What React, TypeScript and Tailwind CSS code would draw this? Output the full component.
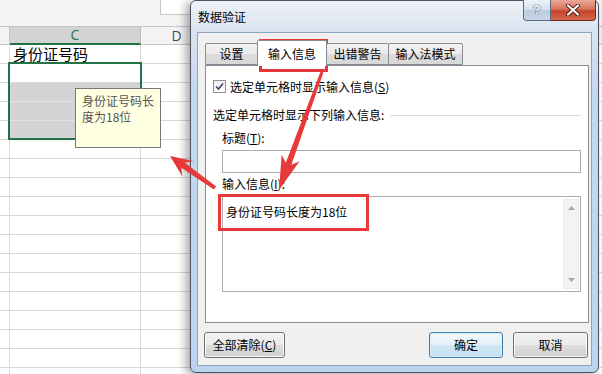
import React from "react";

const CJK = "font-['Noto_Sans_CJK_SC','Microsoft_YaHei',sans-serif]";

// polygon for a hand-drawn style annotation arrow
function arrowPoints(
  x1: number,
  y1: number,
  x2: number,
  y2: number,
  headLen: number,
  headW: number,
  shaftW: number,
  tailW: number
) {
  const dx = x2 - x1;
  const dy = y2 - y1;
  const len = Math.hypot(dx, dy);
  const ux = dx / len;
  const uy = dy / len;
  const px = -uy;
  const py = ux;
  const bx = x2 - ux * headLen;
  const by = y2 - uy * headLen;
  const jx = bx + ux * 6;
  const jy = by + uy * 6;
  const pts = [
    [x1 + (px * tailW) / 2, y1 + (py * tailW) / 2],
    [jx + (px * shaftW) / 2, jy + (py * shaftW) / 2],
    [bx + (px * headW) / 2, by + (py * headW) / 2],
    [x2, y2],
    [bx - (px * headW) / 2, by - (py * headW) / 2],
    [jx - (px * shaftW) / 2, jy - (py * shaftW) / 2],
    [x1 - (px * tailW) / 2, y1 - (py * tailW) / 2],
  ];
  return pts.map((p) => `${p[0].toFixed(1)},${p[1].toFixed(1)}`).join(" ");
}

function Row({ children, shade }: { children?: React.ReactNode; shade?: boolean }) {
  return (
    <div className="flex h-[19px]">
      <div className="w-[10px] border-r border-b border-[#d9d9d9]" />
      <div
        className={
          shade
            ? "w-[131px] border-r border-b border-[#d9d9d9] border-b-[#e4e4e4] bg-[#d4d4d4]"
            : "w-[131px] border-r border-b border-[#d9d9d9] flex items-center pl-[3px]"
        }
      >
        {children}
      </div>
      <div className="w-[72px] border-r border-b border-[#d9d9d9]" />
      <div className="flex-1 border-b border-[#d9d9d9]" />
    </div>
  );
}

function Tab({ label, active, className }: { label: string; active?: boolean; className: string }) {
  return (
    <div
      className={
        active
          ? `h-[26px] flex items-center justify-center border border-b-0 border-[#898c95] rounded-t-[2px] bg-white ${className}`
          : `h-[22px] mb-px flex items-center justify-center border border-[#898c95] rounded-t-[2px] bg-[linear-gradient(to_bottom,#f3f3f3,#ebebeb_50%,#dcdcdc_51%,#d8d8d8)] ${className}`
      }
    >
      <span className={`${CJK} text-[12px] leading-[16px] text-black`}>{label}</span>
    </div>
  );
}

function Btn({ children, primary, className }: { children: React.ReactNode; primary?: boolean; className: string }) {
  return (
    <div
      className={
        primary
          ? `h-[26px] rounded-[3px] border border-[#3c7fb1] bg-[linear-gradient(to_bottom,#f2f8fc,#e3f0f9_50%,#d0e6f4_51%,#c3def0)] shadow-[inset_0_0_0_1px_#dcecf8] flex items-center justify-center ${className}`
          : `h-[26px] rounded-[3px] border border-[#707070] bg-[linear-gradient(to_bottom,#f2f2f2,#ebebeb_50%,#dddddd_51%,#cfcfcf)] shadow-[inset_0_0_0_1px_#fafafa] flex items-center justify-center ${className}`
      }
    >
      <span className={`${CJK} text-[12px] leading-[16px] text-black`}>{children}</span>
    </div>
  );
}

export default function App() {
  return (
    <div className="relative w-[602px] h-[374px] overflow-hidden bg-white">
      {/* spreadsheet */}
      <div className="flex flex-col">
        <div className="h-[26px] bg-[#f4f4f4] flex">
          <div className="ml-[160px] w-[60px] h-[15px] bg-white border-l border-b border-[#c6c6c6]" />
        </div>
        <div className="flex h-[19px] border-t border-[#c6c6c6]">
          <div className="w-[10px] bg-[#f3f3f3] border-r border-b border-[#c6c6c6]" />
          <div className="w-[131px] bg-[#d3d3d3] border-r border-[#b8b8b8] border-b-2 border-b-[#217346] flex items-center justify-center">
            <span className="font-['Open_Sans',sans-serif] text-[14px] leading-[16px] text-[#217346]">C</span>
          </div>
          <div className="w-[72px] bg-[#f3f3f3] border-r border-b border-[#c6c6c6] flex items-center justify-center">
            <span className="font-['Open_Sans',sans-serif] text-[14px] leading-[16px] text-[#4a4a4a]">D</span>
          </div>
          <div className="flex-1 bg-[#f3f3f3] border-b border-[#c6c6c6]" />
        </div>
        <Row>
          <span className={`${CJK} text-[15px] leading-[18px] text-black`}>身份证号码</span>
        </Row>
        <Row />
        <Row shade />
        <Row shade />
        <Row shade />
        {Array.from({ length: 13 }).map((_, i) => (
          <Row key={i} />
        ))}
      </div>

      {/* selection */}
      <div className="absolute left-[8px] top-[62px] w-[134px] h-[78px] border-2 border-[#217346]" />

      {/* comment tooltip */}
      <div className="absolute left-[75px] top-[88px] w-[86px] h-[60px] border border-[#767676] bg-[#ffffe1] pl-[6px] pt-[4px]">
        <p className={`${CJK} text-[12px] leading-[16px] text-[#555]`}>身份证号码长</p>
        <p className={`${CJK} text-[12px] leading-[16px] text-[#555]`}>度为18位</p>
      </div>

      {/* dialog window */}
      <div className="absolute left-[190px] top-0 w-[409px] h-[373px] rounded-[6px] border border-[#4a5260] bg-[linear-gradient(to_bottom,#eef2f7_0px,#dbe4ef_30px,#c4d8f0_90px,#bcd4ef_100%)] shadow-[-4px_2px_10px_rgba(0,0,0,0.35)] flex flex-col">
        <div className="relative h-[31px] flex items-center pl-[7px]">
          <span className={`${CJK} text-[12px] leading-[16px] text-black`}>数据验证</span>
          <div className="absolute right-[2px] top-[-1px] flex">
            <div className="w-[28px] h-[21px] border border-t-0 border-[#5d6b80] rounded-bl-[4px] bg-[linear-gradient(to_bottom,#eef2f8,#d5dfeb_50%,#bccbdd_51%,#c9d7e7)] flex items-center justify-center">
              <span className="font-['Liberation_Sans',sans-serif] font-bold text-[13px] leading-[14px] text-white [text-shadow:0_0_1px_#2a3545,0_0_1px_#2a3545]">?</span>
            </div>
            <div className="w-[45px] h-[21px] border border-t-0 border-l-0 border-[#6e2416] rounded-br-[4px] bg-[linear-gradient(to_bottom,#e9a99a,#d9735c_45%,#c7432b_55%,#d46a4e)] flex items-center justify-center">
              <svg width="14" height="12" viewBox="0 0 14 12">
                <path d="M2 1.5 L12 10.5 M12 1.5 L2 10.5" stroke="#4b1a10" strokeWidth="4" strokeLinecap="round" />
                <path d="M2 1.5 L12 10.5 M12 1.5 L2 10.5" stroke="#ffffff" strokeWidth="2.2" strokeLinecap="round" />
              </svg>
            </div>
          </div>
        </div>

        <div className="mx-[6px] mb-[6px] flex-1 border border-[#8fa3bd] bg-[#f0f0f0] pl-[7px] pr-[2px] pt-[7px] flex flex-col">
          <div className="relative z-10 flex items-end h-[26px]">
            <Tab label="设置" className="w-[53px]" />
            <Tab label="输入信息" active className="w-[70px] -ml-px" />
            <Tab label="出错警告" className="w-[63px] -ml-px" />
            <Tab label="输入法模式" className="w-[75px] -ml-px" />
          </div>
          <div className="-mt-px h-[258px] border border-[#898c95] bg-white pl-[7px] pr-[7px] pt-[14px] flex flex-col">
            <div className="flex items-center h-[13px]">
              <div className="w-[13px] h-[13px] border border-[#8e8f8f] bg-[linear-gradient(to_bottom,#ededed,#ffffff)] flex items-center justify-center">
                <svg width="9" height="9" viewBox="0 0 9 9">
                  <path d="M1 4.5 L3.5 7 L8 1.5" fill="none" stroke="#3a4660" strokeWidth="1.6" />
                </svg>
              </div>
              <span className={`${CJK} ml-[4px] text-[12px] leading-[16px] text-black`}>
                选定单元格时显示输入信息(<span className="underline">S</span>)
              </span>
            </div>
            <div className="mt-[14px] flex items-center h-[16px]">
              <span className={`${CJK} text-[12px] leading-[16px] text-black`}>选定单元格时显示下列输入信息:</span>
              <div className="ml-[6px] flex-1 h-px bg-[#d5dfe5]" />
            </div>
            <div className="pl-[9px] flex flex-col">
              <span className={`${CJK} mt-[7px] text-[12px] leading-[16px] text-black`}>
                标题(<span className="underline">T</span>):
              </span>
              <div className="mt-[4px] h-[23px] border border-[#abadb3] bg-white" />
              <span className={`${CJK} mt-[3px] text-[12px] leading-[16px] text-black`}>
                输入信息(<span className="underline">I</span>):
              </span>
              <div className="mt-[4px] h-[96px] border border-[#abadb3] bg-white flex">
                <div className="flex-1 pl-[3px] pt-[2px]">
                  <span className={`${CJK} text-[12px] leading-[16px] text-black`}>身份证号码长度为18位</span>
                </div>
                <div className="w-[16px] my-[2px] mr-px bg-[#f3f3f3] border border-[#ececec] flex flex-col justify-between items-center py-[6px]">
                  <svg width="7" height="4" viewBox="0 0 7 4">
                    <path d="M0 4 L3.5 0 L7 4 Z" fill="#a8a8a8" />
                  </svg>
                  <svg width="7" height="4" viewBox="0 0 7 4">
                    <path d="M0 0 L3.5 4 L7 0 Z" fill="#a8a8a8" />
                  </svg>
                </div>
              </div>
            </div>
          </div>
          <div className="mt-[9px] flex items-center pr-[1px]">
            <Btn className="w-[81px] -ml-px">
              全部清除(<span className="underline">C</span>)
            </Btn>
            <div className="flex-1" />
            <Btn primary className="w-[74px]">
              确定
            </Btn>
            <Btn className="w-[75px] ml-[10px]">取消</Btn>
          </div>
        </div>
      </div>

      {/* annotations */}
      <div className="absolute left-[259px] top-[39px] w-[69px] h-[33px] border-[3px] border-[#e8393a]" />
      <div className="absolute left-[218px] top-[194px] w-[151px] h-[37px] border-[3px] border-[#e8393a]" />
      <svg className="absolute inset-0 pointer-events-none" width="602" height="374" viewBox="0 0 602 374">
        <polygon points={arrowPoints(215, 188, 170, 156, 22, 19, 6, 4)} fill="#e8393a" />
        <polygon points={arrowPoints(322, 72, 279, 190, 34, 19, 6, 3)} fill="#e8393a" />
      </svg>
    </div>
  );
}
